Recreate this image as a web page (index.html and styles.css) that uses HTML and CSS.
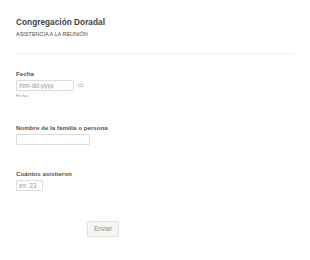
FILE: index.html
```html
<!DOCTYPE html>
<html lang="es">
<head>
    <meta charset="UTF-8">
    <meta name="viewport" content="width=device-width, initial-scale=1.0">
    <title>Congregación Doradal</title>
    <link rel="stylesheet" href="styles.css">
</head>
<body>
    <form class="form">
        <div class="form-header">
            <h1 class="form-title">Congregación Doradal</h1>
            <p class="form-subtitle">ASISTENCIA A LA REUNIÓN</p>
        </div>

        <div class="field field-date">
            <label class="field-label">Fecha</label>
            <div class="date-row">
                <input class="input input-date" type="text" placeholder="mm-dd-yyyy">
                <span class="date-icon"></span>
            </div>
            <span class="sublabel">Fecha</span>
        </div>

        <div class="field field-name">
            <label class="field-label">Nombre de la familia o persona</label>
            <input class="input input-name" type="text">
        </div>

        <div class="field field-count">
            <label class="field-label">Cuántos asistieron</label>
            <input class="input input-count" type="text" placeholder="ex: 23">
        </div>

        <div class="form-actions">
            <button class="submit-button" type="button">Enviar</button>
        </div>
    </form>
</body>
</html>
```

FILE: styles.css
```css
* {
    margin: 0;
    padding: 0;
    box-sizing: border-box;
}

body {
    font-family: "Liberation Sans", Arial, sans-serif;
    background: #ffffff;
    color: #3d3d3d;
}

.form {
    padding: 17px 17px 0 16px;
}

.form-header {
    padding-bottom: 15px;
    border-bottom: 1px solid #efefef;
}

.form-title {
    font-size: 8.3px;
    line-height: 10px;
    font-weight: 700;
    color: #3f3f3f;
}

.form-subtitle {
    margin-top: 4px;
    font-size: 5.5px;
    line-height: 7px;
    color: #4a4a4a;
}

.field {
    display: flex;
    flex-direction: column;
    align-items: flex-start;
}

.field-date {
    margin-top: 16px;
}

.field-name {
    margin-top: 26px;
}

.field-count {
    margin-top: 25px;
}

.field-label {
    font-size: 6.2px;
    line-height: 8px;
    font-weight: 700;
    color: #555555;
    margin-bottom: 2px;
}

.input {
    height: 11px;
    border: 1px solid #dcdcdc;
    border-radius: 1px;
    background: #ffffff;
    font-family: inherit;
    font-size: 6.4px;
    padding: 0 2px;
    color: #555555;
    outline: none;
}

.input::placeholder {
    color: #999999;
}

.input-date {
    width: 58px;
}

.input-name {
    width: 74px;
}

.input-count {
    width: 27px;
}

.date-row {
    display: flex;
    align-items: center;
    gap: 3px;
}

.date-icon {
    width: 7px;
    height: 3px;
    border: 1px solid #c4c4c4;
    border-radius: 2px;
}

.sublabel {
    margin-top: 2px;
    font-size: 4px;
    line-height: 5px;
    color: #8a8a8a;
}

.form-actions {
    margin-top: 26px;
    padding-left: 71px;
}

.submit-button {
    width: 32px;
    height: 16px;
    border: 1px solid #e0e0e0;
    border-radius: 2px;
    background: #f5f5f5;
    font-family: inherit;
    font-size: 6.4px;
    color: #8c8c8c;
    box-shadow: 0 1px 1px rgba(0, 0, 0, 0.05);
}
```
